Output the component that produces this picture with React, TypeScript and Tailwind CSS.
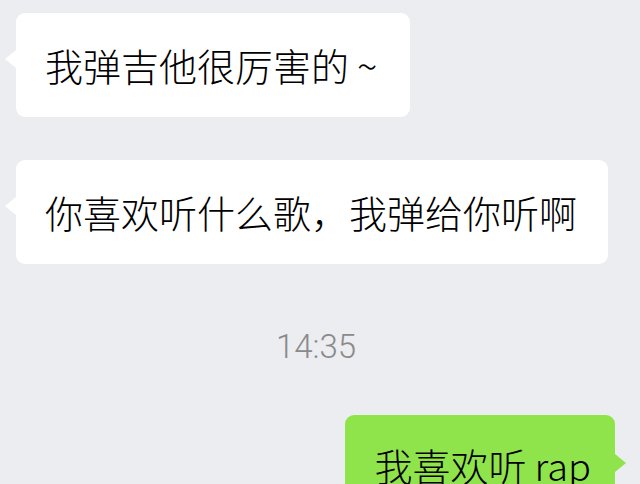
import React from 'react';

const font = { fontFamily: '"Noto Sans CJK SC", "Noto Sans", sans-serif' };

const LeftBubble: React.FC<{ children: React.ReactNode }> = ({ children }) => (
  <div className="relative ml-4 self-start">
    <div className="absolute left-[-11px] top-[37px] h-0 w-0 border-y-[9px] border-r-[11px] border-y-transparent border-r-white" />
    <div className="rounded-[9px] bg-white py-[29px] pl-[29px] pr-[31px] text-[38px] font-light leading-[46px] text-black">
      {children}
    </div>
  </div>
);

export default function App() {
  return (
    <div className="flex h-[484px] w-[640px] flex-col overflow-hidden bg-[#ecedf1] pt-[13px]" style={font}>
      <LeftBubble>
        我弹吉他很厉害的<span className="ml-[8px] mr-[2px]">~</span>
      </LeftBubble>
      <div className="mt-[43px] flex flex-col">
        <LeftBubble>你喜欢听什么歌，我弹给你听啊</LeftBubble>
      </div>
      <div
        className="mt-[64px] flex justify-center pr-2 text-[33px] font-light leading-[38px] text-[#8a8a8a]"
        style={{ fontFamily: 'Roboto, "Liberation Sans", sans-serif' }}
      >
        14:35
      </div>
      <div className="mt-[49px] flex flex-col">
        <div className="relative mr-[25px] self-end">
          <div className="absolute right-[-11px] top-[39px] h-0 w-0 border-y-[9px] border-l-[11px] border-y-transparent border-l-[#8fe44c]" />
          <div className="rounded-[9px] bg-[#8fe44c] pb-[29px] pt-[27px] pl-[29px] pr-[24px] text-[38px] font-light leading-[46px] text-black">
            我喜欢听<span className="ml-[8px]">rap</span>
          </div>
        </div>
      </div>
    </div>
  );
}
